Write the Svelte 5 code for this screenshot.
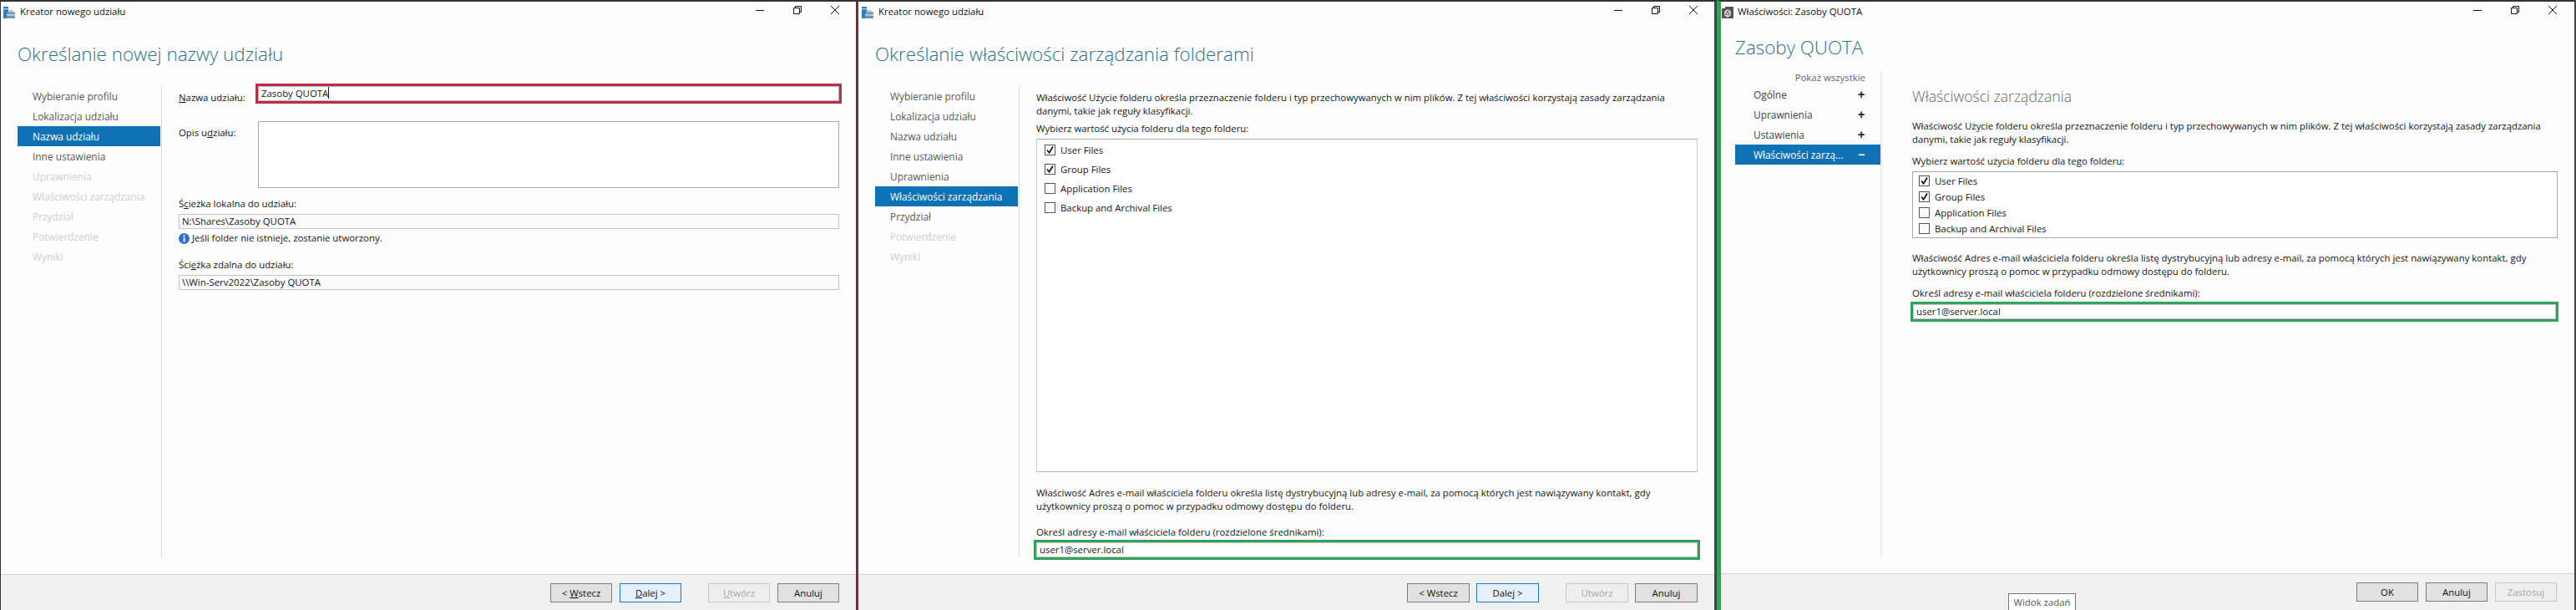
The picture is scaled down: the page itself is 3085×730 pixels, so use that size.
<script>
  const wizard = ['Wybieranie profilu','Lokalizacja udziału','Nazwa udziału','Inne ustawienia','Uprawnienia','Właściwości zarządzania','Przydział','Potwierdzenie','Wyniki'];
  const files = [['User Files',true],['Group Files',true],['Application Files',false],['Backup and Archival Files',false]];
  const para1a = 'Właściwość Użycie folderu określa przeznaczenie folderu i typ przechowywanych w nim plików. Z tej właściwości korzystają zasady zarządzania';
  const para1b = 'danymi, takie jak reguły klasyfikacji.';
  const para2a = 'Właściwość Adres e-mail właściciela folderu określa listę dystrybucyjną lub adresy e-mail, za pomocą których jest nawiązywany kontakt, gdy';
  const para2b = 'użytkownicy proszą o pomoc w przypadku odmowy dostępu do folderu.';
  const props = [['Ogólne','+'],['Uprawnienia','+'],['Ustawienia','+'],['Właściwości zarzą...','−']];
</script>

{#snippet titlebar(text, kind)}
  <div class="titlebar">
    {#if kind === 'share'}
      <svg class="appicon" viewBox="0 0 14 14" width="14" height="14"><rect x="0" y="0" width="6" height="2.4" fill="#2f7fbf"/><rect x="0" y="3.2" width="6" height="10.8" fill="#2f7fbf"/><rect x="4" y="6.5" width="10" height="7.5" fill="#6f97ab"/><rect x="4" y="9.4" width="10" height="1" fill="#fff"/><path d="M7 6.5V5h4v1.5" fill="none" stroke="#6f97ab" stroke-width="1"/></svg>
    {:else}
      <svg class="appicon" viewBox="0 0 14 14" width="14" height="14"><rect width="14" height="14" fill="#555"/><rect x="0" y="0" width="4" height="2" fill="#fff"/><path d="M4 6l3-2 3 2v4l-3 2-3-2z" fill="none" stroke="#fff" stroke-width="1.2"/><path d="M4 6l3 2 3-2M7 8v4" fill="none" stroke="#fff" stroke-width="1"/></svg>
    {/if}
    <span class="wintitle">{text}</span>
    <div class="controls">
      <svg width="10" height="10" viewBox="0 0 10 10"><path d="M0 5.5h10" stroke="#111" stroke-width="1"/></svg>
      <svg width="10" height="10" viewBox="0 0 10 10"><path d="M.5 2.5h7v7h-7zM2.5 2.5v-2h7v7h-2" fill="none" stroke="#111" stroke-width="1"/></svg>
      <svg width="10" height="10" viewBox="0 0 10 10"><path d="M0 0l10 10M10 0L0 10" stroke="#111" stroke-width="1"/></svg>
    </div>
  </div>
{/snippet}

{#snippet steps(selected, enabled)}
  <nav class="steps">
    {#each wizard as item, i}
      <div class="step" class:selected={i === selected} class:off={i > enabled}>{item}</div>
    {/each}
  </nav>
{/snippet}

{#snippet checks(cls)}
  <div class="listbox {cls}">
    {#each files as [name, on]}
      <div class="check">
        <span class="box">{#if on}<svg width="11" height="11" viewBox="0 0 11 11"><path d="M2 5.5l2.6 3.2L9 1.5" fill="none" stroke="#111" stroke-width="1.7"/></svg>{/if}</span>
        <span>{name}</span>
      </div>
    {/each}
  </div>
{/snippet}

{#snippet footer(accel)}
  <footer class="foot">
    <button class="btn">&lt; {#if accel}<u>W</u>stecz{:else}Wstecz{/if}</button>
    <button class="btn primary">{#if accel}<u>D</u>alej{:else}Dalej{/if} &gt;</button>
    <button class="btn off spaced">{#if accel}<u>U</u>twórz{:else}Utwórz{/if}</button>
    <button class="btn">Anuluj</button>
  </footer>
{/snippet}

<div class="desk">
  <section class="win w1">
    {@render titlebar('Kreator nowego udziału', 'share')}
    <h1 class="head">Określanie nowej nazwy udziału</h1>
    <div class="body">
      {@render steps(2, 3)}
      <div class="content">
        <div class="namegrid">
          <div class="side"><u>N</u>azwa udziału:</div>
          <div class="field red">Zasoby QUOTA<i class="caret"></i></div>
          <div class="side">Opis u<u>d</u>ziału:</div>
          <div class="area"></div>
        </div>
        <div class="lab l1">Ś<u>c</u>ieżka lokalna do udziału:</div>
        <div class="field ro">N:\Shares\Zasoby QUOTA</div>
        <div class="note">
          <svg width="13" height="13" viewBox="0 0 13 13"><circle cx="6.5" cy="6.5" r="6.5" fill="#2f6fd0"/><rect x="5.6" y="5.4" width="1.9" height="5" fill="#fff"/><circle cx="6.5" cy="3.4" r="1.1" fill="#fff"/></svg>
          <span>Jeśli folder nie istnieje, zostanie utworzony.</span>
        </div>
        <div class="lab l2">Ści<u>e</u>żka zdalna do udziału:</div>
        <div class="field ro">\\Win-Serv2022\Zasoby QUOTA</div>
      </div>
    </div>
    {@render footer(true)}
  </section>

  <section class="win w2">
    {@render titlebar('Kreator nowego udziału', 'share')}
    <h1 class="head">Określanie właściwości zarządzania folderami</h1>
    <div class="body">
      {@render steps(5, 6)}
      <div class="content mgmt">
        <p>{para1a}<br>{para1b}</p>
        <div class="lab choose">Wybierz wartość użycia folderu dla tego folderu:</div>
        {@render checks('tall')}
        <p class="p2">{para2a}<br>{para2b}</p>
        <div class="lab addr">Określ adresy e-mail właściciela folderu (rozdzielone średnikami):</div>
        <div class="field green">user1@server.local</div>
      </div>
    </div>
    {@render footer(false)}
  </section>

  <section class="win w3">
    {@render titlebar('Właściwości: Zasoby QUOTA', 'props')}
    <h1 class="head">Zasoby QUOTA</h1>
    <div class="body">
      <nav class="steps psteps">
        <div class="showall">Pokaż wszystkie</div>
        {#each props as [name, sign], i}
          <div class="pstep" class:selected={i === 3}><span>{name}</span><b>{sign}</b></div>
        {/each}
      </nav>
      <div class="content pcontent">
        <h2>Właściwości zarządzania</h2>
        <p class="p0">{para1a}<br>{para1b}</p>
        <div class="lab c3">Wybierz wartość użycia folderu dla tego folderu:</div>
        {@render checks('short')}
        <p class="p3">{para2a}<br>{para2b}</p>
        <div class="lab a3">Określ adresy e-mail właściciela folderu (rozdzielone średnikami):</div>
        <div class="field green g3">user1@server.local</div>
      </div>
    </div>
    <footer class="foot">
      <button class="btn">OK</button>
      <button class="btn">Anuluj</button>
      <button class="btn off">Zastosuj</button>
    </footer>
    <div class="tip">Widok zadań</div>
  </section>
</div>

<style>
  :global(body) { margin: 0; background: #fdfdfd; }
  .desk { display: flex; width: 3085px; height: 730px; overflow: hidden; font-family: "Open Sans", "Noto Sans", sans-serif; font-size: 11.4px; color: #161616; line-height: 16px; }
  .win { position: relative; display: flex; flex-direction: column; height: 730px; box-sizing: border-box; background: #fdfdfd; border-top: 2px solid #333; }
  .w1 { width: 1028px; border-left: 1px solid #333; border-right: 3px solid #6e2f38; }
  .w2 { width: 1028px; border-right: 3px solid #444; }
  .w3 { width: 1029px; border-left: 5px solid #2fa35a; border-right: 2px solid #444; }

  .titlebar { display: flex; align-items: center; height: 24px; padding: 0 20px 0 4px; flex: none; }
  .w1 .titlebar { padding-left: 3px; }
  .w3 .titlebar { padding-left: 1px; padding-right: 21px; }
  .appicon { flex: none; margin-right: 6px; margin-top: 2px; }
  .w3 .appicon { margin-right: 5px; }
  .wintitle { color: #111; }
  .controls { display: flex; gap: 35px; margin-left: auto; margin-top: -4px; }

  .head { margin: 0; flex: none; box-sizing: border-box; height: 77px; padding: 24px 0 0 20px; font: 300 22.4px/30px "Open Sans", sans-serif; color: #2f7085; }
  .w3 .head { height: 59px; padding: 16px 0 0 17px; }

  .body { display: flex; flex: none; height: 564px; }
  .w3 .body { height: 582px; }
  .steps { flex: none; box-sizing: border-box; width: 173px; margin-left: 20px; border-right: 1px solid #dcdcdc; height: 100%; padding-right: 1px; font-size: 11.9px; }
  .step { height: 24px; line-height: 24px; padding-left: 18px; color: #5a5a5a; }
  .step.off { color: #cfcfcf; }
  .step.selected, .pstep.selected { background: #0f72b4; color: #fff; }

  .content { flex: 1; min-width: 0; padding: 0 20px; }
  p { margin: 0; }

  .namegrid { display: grid; grid-template-columns: 95px 1fr; row-gap: 20px; }
  .side { padding-top: 6px; }
  .field { box-sizing: border-box; height: 18px; line-height: 16px; padding-left: 3px; border: 1px solid #c4c4c4; background: #fff; white-space: nowrap; }
  .ro { background: #fbfbfb; }
  .red { outline: 3px solid #bd2c45; border-color: #bbb; }
  .caret { display: inline-block; width: 1px; height: 14px; background: #111; vertical-align: -2px; }
  .area { box-sizing: border-box; height: 80px; border: 1px solid #a9a9a9; background: #fff; }
  .lab { height: 16px; white-space: nowrap; }
  .l1 { margin: 11px 0 4px; }
  .l2 { margin: 16px 0 4px; }
  .note { display: flex; align-items: center; gap: 3px; height: 16px; margin-top: 3px; }

  .mgmt { padding-top: 6px; }
  .choose { margin: 5px 0 4px; }
  .listbox { box-sizing: border-box; border: 1px solid #b5b5b5; background: #fff; }
  .tall { height: 399px; padding: 1px 0 0 9px; border-top-color: #aaa; border-left-color: #ccc; border-right-color: #ccc; }
  .short { height: 80px; padding: 1px 0 0 7px; border-color: #a8a8a8; }
  .check { display: flex; align-items: center; gap: 6px; }
  .tall .check { height: 23px; }
  .short .check { height: 19px; }
  .box { box-sizing: border-box; display: flex; align-items: center; justify-content: center; width: 13px; height: 13px; border: 1px solid #555; background: #fff; }
  .p2 { margin-top: 17px; }
  .addr { margin: 15px 0 4px; }
  .green { outline: 3px solid #2fa35a; }

  .psteps { width: 176px; margin-left: 17px; border-right: 2px solid #ececec; padding-right: 0; }
  .showall { height: 16px; text-align: right; padding-right: 18px; color: #666; font-size: 11.4px; }
  .pstep { display: flex; justify-content: space-between; align-items: center; height: 24px; padding: 0 19px 0 22px; color: #444; }
  .pstep b { font: 700 14px/24px "Liberation Sans", sans-serif; color: #222; width: 8px; text-align: center; }
  .pstep.selected b { color: #fff; }

  .pcontent { padding: 18px 20px 0 36px; }
  h2 { margin: 0; height: 24px; font: 300 17.6px/24px "Open Sans", sans-serif; color: #666; }
  .p0 { margin-top: 16px; }
  .c3 { margin: 10px 0 4px; }
  .p3 { margin-top: 16px; }
  .a3 { margin: 10px 0 5px; }
  .g3 { margin: 0 2px 0 1px; }

  .foot { flex: none; display: flex; justify-content: flex-end; box-sizing: border-box; height: 43px; padding: 10px 20px 0 0; gap: 9px; background: #f0f0f0; border-top: 1px solid #d2d2d2; margin-top: 20px; }
  .w2 .foot { gap: 8px; }
  .w3 .foot { margin-top: 19px; height: 44px; padding-right: 21px; }
  .btn { box-sizing: border-box; width: 74px; height: 23px; padding: 0; border: 1px solid #7d7d7d; background: #e1e1e1; font: inherit; color: #111; }
  .w2 .btn { width: 75px; }
  .primary { background: #e4f0fa; border-color: #1f78c4; }
  .btn.off { color: #a8a8a8; border-color: #c8c8c8; background: #eeeeee; }
  .spaced { margin-left: 23px; }
  .w2 .spaced { margin-left: 24px; }
  .tip { position: absolute; left: 344px; bottom: 0; box-sizing: border-box; width: 81px; height: 20px; border: 1px solid #767676; border-bottom: 0; background: #fff; text-align: center; line-height: 19px; color: #555; }
</style>
